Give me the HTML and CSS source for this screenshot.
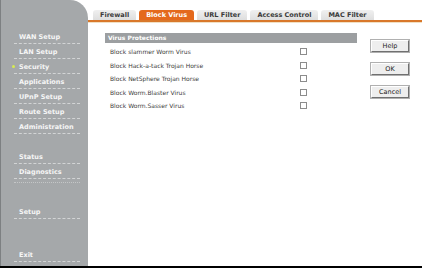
FILE: index.html
```html
<!DOCTYPE html>
<html lang="en">
<head>
    <meta charset="UTF-8">
    <title>Block Virus</title>
    <link rel="stylesheet" href="styles.css">
</head>
<body>
    <div class="page">
        <div class="sidebar">
            <ul class="menu">
                <li>WAN Setup</li>
                <li>LAN Setup</li>
                <li class="active">Security</li>
                <li>Applications</li>
                <li>UPnP Setup</li>
                <li>Route Setup</li>
                <li>Administration</li>
            </ul>
            <ul class="menu group-status">
                <li>Status</li>
                <li>Diagnostics</li>
                <li class="blank"></li>
            </ul>
            <ul class="menu group-setup">
                <li>Setup</li>
            </ul>
            <ul class="menu group-exit">
                <li>Exit</li>
            </ul>
        </div>

        <div class="main">
            <div class="tabs">
                <span class="tab">Firewall</span>
                <span class="tab current">Block Virus</span>
                <span class="tab">URL Filter</span>
                <span class="tab">Access Control</span>
                <span class="tab">MAC Filter</span>
            </div>

            <div class="content">
                <div class="panel">
                    <div class="panel-title">Virus Protections</div>
                    <div class="row"><span class="label">Block slammer Worm Virus</span><span class="check"></span></div>
                    <div class="row"><span class="label">Block Hack-a-tack Trojan Horse</span><span class="check"></span></div>
                    <div class="row"><span class="label">Block NetSphere Trojan Horse</span><span class="check"></span></div>
                    <div class="row"><span class="label">Block Worm.Blaster Virus</span><span class="check"></span></div>
                    <div class="row"><span class="label">Block Worm.Sasser Virus</span><span class="check"></span></div>
                </div>
                <div class="buttons">
                    <button class="btn">Help</button>
                    <button class="btn">OK</button>
                    <button class="btn">Cancel</button>
                </div>
            </div>
        </div>
    </div>
</body>
</html>
```

FILE: styles.css
```css
/* Basis */
body {
    margin: 0;
    background-color: #ffffff;
    font-family: "DejaVu Sans", Verdana, sans-serif;
}

.page {
    display: flex;
    width: 422px;
    height: 266px;
    border-bottom: 2px solid #000000;
}

/* Lijevi izbornik */
.sidebar {
    width: 88px;
    border-left: 1px solid #7d8082;
    background-color: #a5a8aa;
    border-top-right-radius: 18px;
    padding-top: 29px;
    box-sizing: border-box;
}

.menu {
    list-style: none;
    margin: 0;
    padding: 0;
}

.menu li {
    position: relative;
    margin: 0 8px 0 13px;
    height: 10px;
    padding: 3px 0 1px 5px;
    line-height: 10px;
    font-size: 6.5px;
    font-weight: bold;
    color: #f6f6f6;
    border-bottom: 1px dashed rgba(255, 255, 255, 0.5);
}

.menu li.active::before {
    content: "";
    position: absolute;
    left: -2px;
    top: 6px;
    width: 3px;
    height: 3px;
    border-radius: 50%;
    background-color: #d6ec52;
}

.menu li.blank {
    height: 3px;
    padding: 0;
    border-bottom-style: dotted;
    border-bottom-color: rgba(255, 255, 255, 0.35);
}

.group-status {
    margin-top: 15px;
}

.group-setup {
    margin-top: 21px;
}

.group-exit {
    margin-top: 28px;
}

/* Glavni dio */
.main {
    flex: 1;
}

.tabs {
    display: flex;
    gap: 3px;
    padding: 10px 0 0 5px;
    border-bottom: 2px solid #d9782a;
    box-shadow: 0 1px 0 #f1e0c4;
}

.tab {
    height: 10px;
    line-height: 11px;
    padding: 0 7px;
    font-size: 6.5px;
    font-weight: bold;
    color: #3a3a3a;
    background: linear-gradient(#f0f0f0, #dedede);
    border-radius: 3px 3px 0 0;
}

.tab.current {
    background: #e4691d;
    color: #ffffff;
}

.content {
    display: flex;
    margin-top: 11px;
    padding-left: 17px;
}

.panel {
    width: 252px;
}

.panel-title {
    height: 10px;
    line-height: 10px;
    padding-left: 3px;
    background-color: #9c9fa1;
    color: #ffffff;
    font-size: 6px;
    font-weight: bold;
    margin-bottom: 2px;
}

.row {
    display: flex;
    align-items: center;
    height: 13.5px;
    padding-left: 5px;
}

.label {
    width: 190px;
    font-size: 6px;
    color: #3c3c3c;
}

.check {
    width: 5px;
    height: 5px;
    border: 1px solid #8c8c8c;
    background-color: #ffffff;
}

/* Gumbi */
.buttons {
    display: flex;
    flex-direction: column;
    gap: 11px;
    margin-left: 14px;
    margin-top: 7px;
}

.btn {
    width: 38px;
    height: 12px;
    padding: 0;
    font-family: "DejaVu Sans", Verdana, sans-serif;
    font-size: 6.5px;
    color: #1a1a1a;
    background-color: #eeeeee;
    border: 1px solid;
    border-color: #ffffff #707070 #707070 #ffffff;
    outline: 1px solid #b0b0b0;
}
```
